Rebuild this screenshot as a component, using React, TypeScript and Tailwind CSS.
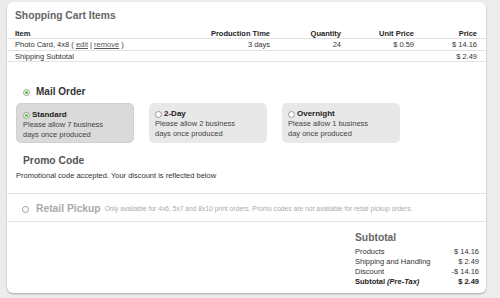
import React from "react";

const Radio = ({ checked, size = 7 }: { checked?: boolean; size?: number }) => (
  <span
    className="inline-flex items-center justify-center rounded-full border border-[#9a9a9a] bg-white shrink-0"
    style={{ width: size, height: size }}
  >
    {checked && <span className="block w-[3px] h-[3px] rounded-full bg-[#4cc21a]" />}
  </span>
);

const ShipCard = ({
  title,
  lines,
  selected,
}: {
  title: string;
  lines: string[];
  selected?: boolean;
}) => (
  <div
    className={`w-[118px] h-[40px] rounded-[5px] pt-[6px] pl-[6px] ${
      selected ? "bg-[#dadada] border border-[#d0d0d0] pt-[5px] pl-[5px]" : "bg-[#e8e8e8]"
    }`}
  >
    <div className="flex items-center gap-[2px] h-[10px]">
      <Radio checked={selected} size={7} />
      <span className="font-bold text-[8px] text-[#222] leading-[10px]">{title}</span>
    </div>
    {lines.map((l) => (
      <div key={l} className="text-[7.5px] leading-[9.5px] text-[#444]">
        {l}
      </div>
    ))}
  </div>
);

export default function App() {
  return (
    <div
      className="w-[500px] h-[298px] bg-[#ececec] pt-[2px] pl-[7px] overflow-hidden"
      style={{ fontFamily: '"Liberation Sans", Arial, Helvetica, sans-serif' }}
    >
      <div className="w-[479px] h-[291px] bg-white rounded-[6px] shadow-[0_1px_2px_rgba(0,0,0,0.3)] flex flex-col">
        {/* Title */}
        <div className="pt-[8px] pl-[8px] h-[26px] text-[10.3px] leading-[12px] font-bold text-[#666]">
          Shopping Cart Items
        </div>
        {/* Table */}
        <div className="text-[7.5px] text-[#333]">
          <div className="grid grid-cols-[1fr_70px_71px_73px_63px] pl-[8px] pr-[9px] h-[11px] items-center border-b border-[#e2e2e2] font-bold text-[#222]">
            <span>Item</span>
            <span className="text-right">Production Time</span>
            <span className="text-right">Quantity</span>
            <span className="text-right">Unit Price</span>
            <span className="text-right">Price</span>
          </div>
          <div className="grid grid-cols-[1fr_70px_71px_73px_63px] pl-[8px] pr-[9px] h-[12px] items-center border-b border-[#e2e2e2]">
            <span>
              Photo Card, 4x8 ( <span className="underline text-[#555]">edit</span> |{" "}
              <span className="underline text-[#555]">remove</span> )
            </span>
            <span className="text-right">3 days</span>
            <span className="text-right">24</span>
            <span className="text-right">$ 0.59</span>
            <span className="text-right">$ 14.16</span>
          </div>
          <div className="grid grid-cols-[1fr_70px_71px_73px_63px] pl-[8px] pr-[9px] h-[11px] items-center border-b border-[#e2e2e2]">
            <span>Shipping Subtotal</span>
            <span />
            <span />
            <span />
            <span className="text-right">$ 2.49</span>
          </div>
        </div>
        {/* Mail Order */}
        <div className="mt-[24px] pl-[16px] flex items-center gap-[3px] h-[12px]">
          <Radio checked size={7} />
          <span className="ml-[3px] text-[10px] leading-[12px] font-bold text-[#333]">Mail Order</span>
        </div>
        <div className="mt-[5px] pl-[9px] flex gap-[15px]">
          <ShipCard title="Standard" lines={["Please allow 7 business", "days once produced"]} selected />
          <ShipCard title="2-Day" lines={["Please allow 2 business", "days once produced"]} />
          <ShipCard title="Overnight" lines={["Please allow 1 business", "day once produced"]} />
        </div>
        {/* Promo */}
        <div className="mt-[12px] pl-[16px] text-[10.3px] leading-[12px] font-bold text-[#555]">Promo Code</div>
        <div className="mt-[4px] pl-[9px] text-[7.5px] leading-[10px] text-[#333] pb-[12px] border-b border-[#e2e2e2]">
          Promotional code accepted. Your discount is reflected below
        </div>
        {/* Retail pickup */}
        <div className="h-[28px] pt-[3px] pl-[15px] flex items-center border-b border-[#e2e2e2]">
          <Radio size={7} />
          <span className="ml-[7px] text-[10.3px] leading-[12px] font-bold text-[#aaa]">Retail Pickup</span>
          <span className="ml-[4px] text-[6.7px] text-[#aaa]">
            Only available for 4x6, 5x7 and 8x10 print orders. Promo codes are not available for retail pickup orders.
          </span>
        </div>
        {/* Subtotal */}
        <div className="flex justify-end pr-[7px] pt-[10px]">
          <div className="w-[124px]">
            <div className="text-[10.3px] leading-[12px] font-bold text-[#666]">Subtotal</div>
            <div className="mt-[3px] text-[7.5px] leading-[10px] text-[#333]">
              <div className="flex justify-between">
                <span>Products</span>
                <span>$ 14.16</span>
              </div>
              <div className="flex justify-between">
                <span>Shipping and Handling</span>
                <span>$ 2.49</span>
              </div>
              <div className="flex justify-between">
                <span>Discount</span>
                <span>-$ 14.16</span>
              </div>
              <div className="flex justify-between font-bold text-[#222]">
                <span>
                  Subtotal <i>(Pre-Tax)</i>
                </span>
                <span>$ 2.49</span>
              </div>
            </div>
          </div>
        </div>
      </div>
    </div>
  );
}
